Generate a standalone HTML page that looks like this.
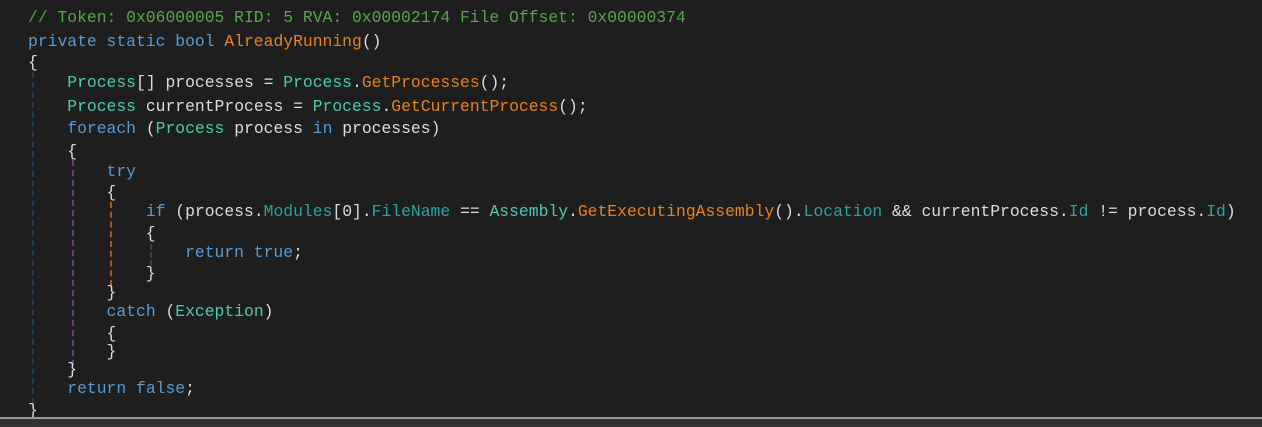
<!DOCTYPE html>
<html><head><meta charset="utf-8"><style>
html,body{margin:0;padding:0;background:#1e1e1e;width:1262px;height:427px;overflow:hidden;position:relative}
.l{position:absolute;left:28px;height:22px;line-height:22px;white-space:pre;font-family:"Liberation Mono",monospace;font-size:16.38px;color:#dcdcdc}
.c{color:#57a64a}.k{color:#569cd6}.t{color:#4ec9b0}.m{color:#e8821e}.p{color:#2aa3a3}
.g{position:absolute;width:0;border-left:2px dashed}
</style></head><body>
<div class="g" style="left:32px;top:72px;height:332px;border-color:#1f3a55"></div>
<div class="g" style="left:72px;top:160px;height:206px;border-color:#6a3a8a"></div>
<div class="g" style="left:110px;top:202px;height:84px;border-color:#b0561a"></div>
<div class="g" style="left:150px;top:244px;height:22px;border-color:#2c4a22"></div>

<div class="l c" style="top:7px">// Token: 0x06000005 RID: 5 RVA: 0x00002174 File Offset: 0x00000374</div>
<div class="l" style="top:31px"><span class="k">private static bool</span> <span class="m">AlreadyRunning</span>()</div>
<div class="l" style="top:52px">{</div>
<div class="l" style="top:72px">    <span class="t">Process</span>[] processes = <span class="t">Process</span>.<span class="m">GetProcesses</span>();</div>
<div class="l" style="top:96px">    <span class="t">Process</span> currentProcess = <span class="t">Process</span>.<span class="m">GetCurrentProcess</span>();</div>
<div class="l" style="top:118px">    <span class="k">foreach</span> (<span class="t">Process</span> process <span class="k">in</span> processes)</div>
<div class="l" style="top:141px">    {</div>
<div class="l" style="top:161px">        <span class="k">try</span></div>
<div class="l" style="top:182px">        {</div>
<div class="l" style="top:201px">            <span class="k">if</span> (process.<span class="p">Modules</span>[0].<span class="p">FileName</span> == <span class="t">Assembly</span>.<span class="m">GetExecutingAssembly</span>().<span class="p">Location</span> &amp;&amp; currentProcess.<span class="p">Id</span> != process.<span class="p">Id</span>)</div>
<div class="l" style="top:223px">            {</div>
<div class="l" style="top:242px">                <span class="k">return true</span>;</div>
<div class="l" style="top:263px">            }</div>
<div class="l" style="top:282px">        }</div>
<div class="l" style="top:301px">        <span class="k">catch</span> (<span class="t">Exception</span>)</div>
<div class="l" style="top:323px">        {</div>
<div class="l" style="top:341px">        }</div>
<div class="l" style="top:359px">    }</div>
<div class="l" style="top:378px">    <span class="k">return false</span>;</div>
<div class="l" style="top:400px">}</div>

<div style="position:absolute;left:0;top:417px;width:1262px;height:2px;background:#9a9a9a"></div>
<div style="position:absolute;left:0;top:419px;width:1262px;height:8px;background:#333333"></div>
</body></html>
